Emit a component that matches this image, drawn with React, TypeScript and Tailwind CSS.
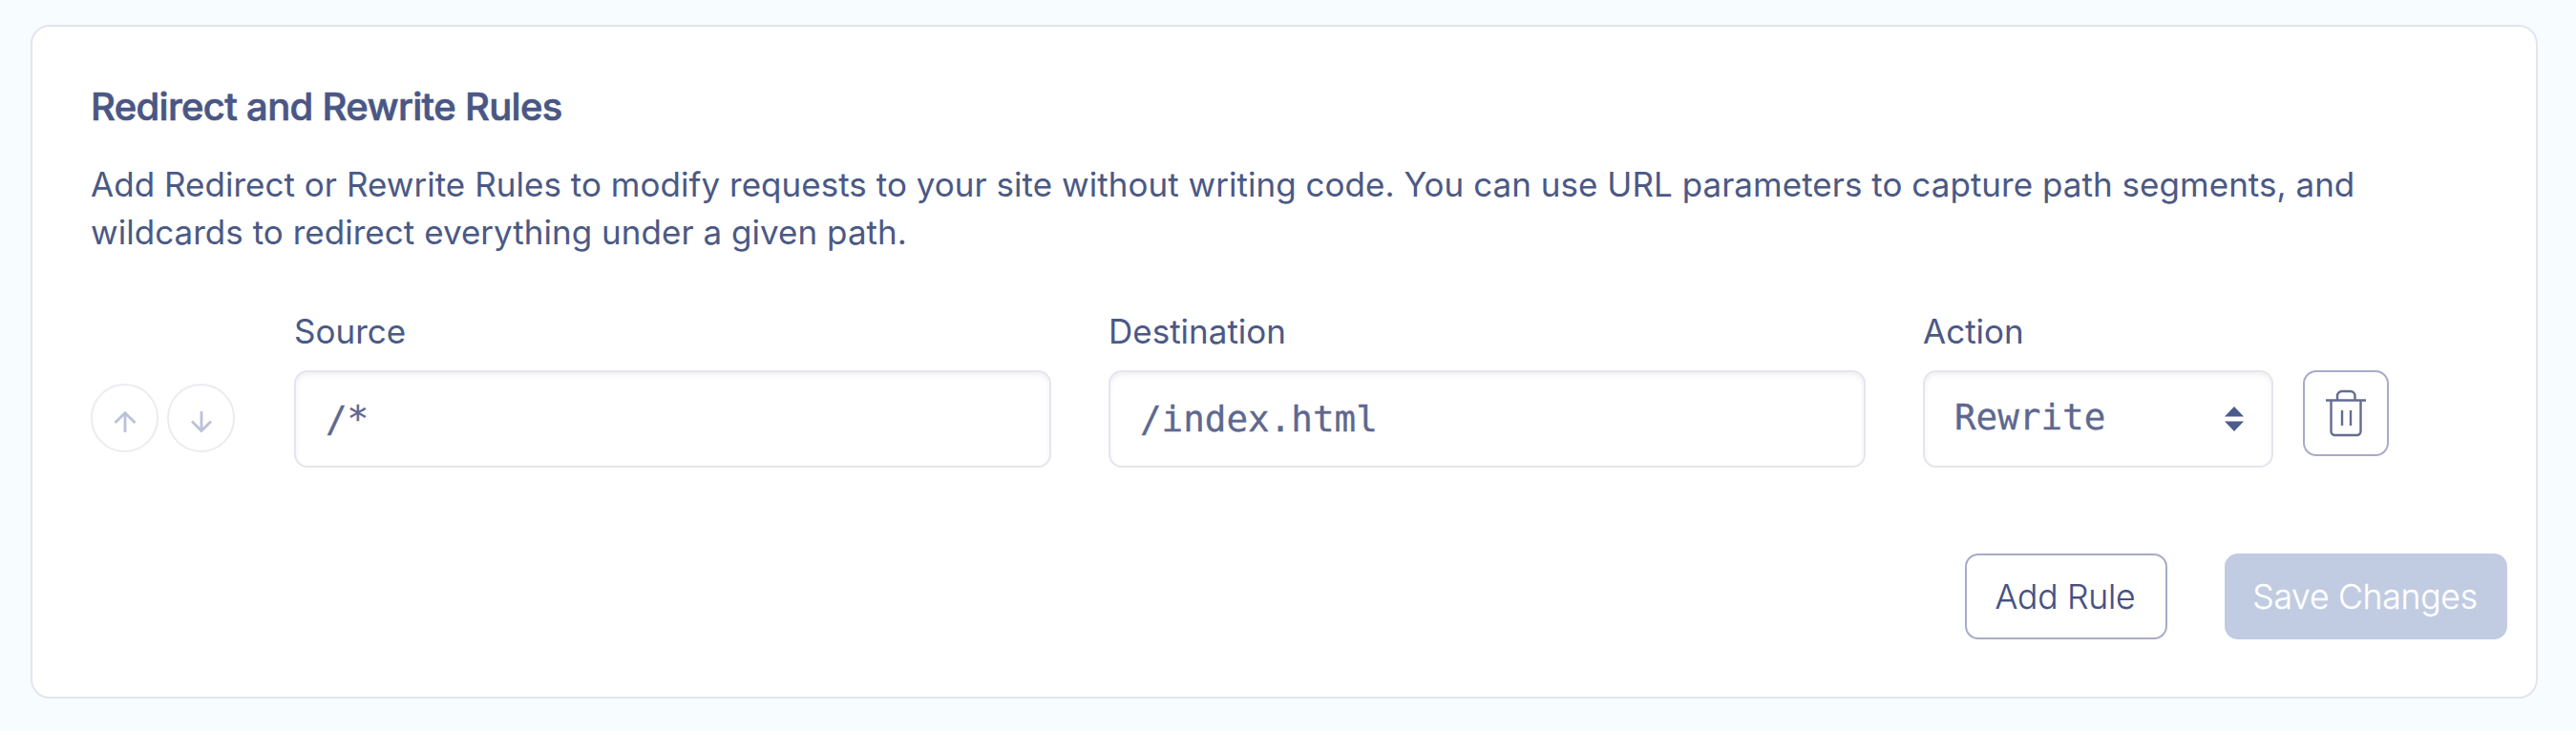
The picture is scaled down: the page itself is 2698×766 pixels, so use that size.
import React from "react";

const sans = "font-['Inter',sans-serif]";
const mono = "font-['DejaVu_Sans_Mono',monospace]";
const box =
  "flex h-[102px] items-center rounded-[14px] border-2 border-[#e5e5ee] bg-white shadow-[inset_0_3px_5px_rgba(60,60,110,0.08)]";

function RoundButton({ down = false }: { down?: boolean }) {
  return (
    <button
      type="button"
      aria-label={down ? "Move down" : "Move up"}
      className="flex h-[72px] w-[71px] items-center justify-center rounded-full border-2 border-[#ebebf2] pt-[8px] text-[#bcc1d9]"
    >
      <svg width="24" height="24" viewBox="0 0 24 24" fill="none" stroke="currentColor" strokeWidth="2.8">
        {down ? <path d="M12 1v20.500M2 11.500l10 10 10-10" /> : <path d="M12 23V2.500M1.500 13L12 2.800 22.500 13" />}
      </svg>
    </button>
  );
}

function Field({ label, value }: { label: string; value: string }) {
  return (
    <div className="w-[793px]">
      <div className="text-[35px] leading-[50px]">{label}</div>
      <div className={`mt-[16px] px-[31px] ${box} ${mono}`}>
        <span className="text-[37.6px] leading-[50px] text-[#5e688f] [-webkit-text-stroke:0.3px_#5e688f]">{value}</span>
      </div>
    </div>
  );
}

export default function App() {
  return (
    <div className={`h-[766px] w-[2698px] bg-[#f7fcff] pl-[32px] pt-[26px] text-[#4b5985] ${sans}`}>
      <section className="flex h-[706px] w-[2626px] flex-col rounded-[20px] border-2 border-[#e3e5ee] bg-white pl-[61px] pr-[30px] pt-[58px]">
        <h1 className="text-[40px] font-medium leading-[52px] tracking-[-0.68px] text-[#4a5785] [-webkit-text-stroke:0.7px_#4a5785]">
          Redirect and Rewrite Rules
        </h1>
        <p className="mt-[30px] whitespace-nowrap text-[35px] leading-[50px] tracking-[0.03px]">
          Add Redirect or Rewrite Rules to modify requests to your site without writing code. You can use URL
          parameters to capture path segments, and
          <br />
          wildcards to redirect everything under a given path.
        </p>
        <div className="mt-[54px] flex">
          <div className="mr-[63px] mt-[80px] flex gap-[9px]">
            <RoundButton />
            <RoundButton down />
          </div>
          <div className="-ml-px flex gap-[60px]">
            <Field label="Source" value="/*" />
            <Field label="Destination" value="/index.html" />
          </div>
          <div className="ml-[60px] w-[367px]">
            <div className="text-[35px] leading-[50px]">Action</div>
            <div className={`mt-[16px] justify-between pl-[31px] pr-[29px] ${box} ${mono}`}>
              <span className="-mt-[4px] text-[37.6px] leading-[50px] text-[#5e688f] [-webkit-text-stroke:0.3px_#5e688f]">
                Rewrite
              </span>
              <svg width="20" height="26" viewBox="0 0 20 26" fill="#4a5b8c">
                <path d="M10 0l10 10.500H0zM0 15.500h20L10 26z" />
              </svg>
            </div>
          </div>
          <button
            type="button"
            aria-label="Delete rule"
            className="ml-[31px] mt-[66px] flex h-[90px] w-[90px] items-center justify-center rounded-[14px] border-2 border-[#a7abc9]"
          >
            <svg width="42" height="50" viewBox="0 0 42 50" fill="none" stroke="#646d91" strokeWidth="2.4">
              <path d="M0 11.500h42M5.500 11.500v32.500a4 4 0 0 0 4 4h23a4 4 0 0 0 4-4V11.500M12 11.500V7a5 5 0 0 1 5-5h8.500a5 5 0 0 1 5 5v4.500M17 22v16M26 22v16" />
            </svg>
          </button>
        </div>
        <div className="mt-[90px] flex justify-end gap-[60px] text-[35.5px] font-light tracking-[-0.24px]">
          <button
            type="button"
            className="h-[90px] w-[212px] whitespace-nowrap rounded-[14px] border-2 border-[#a7abc9] pr-[2px] pt-[2px] text-[#465082] [-webkit-text-stroke:0.2px_#465082]"
          >
            Add Rule
          </button>
          <button
            type="button"
            disabled
            className="h-[90px] w-[296px] whitespace-nowrap rounded-[14px] bg-[#c1cce2] pr-[2px] pt-[2px] text-white [-webkit-text-stroke:0.3px_#ffffff]"
          >
            Save Changes
          </button>
        </div>
      </section>
    </div>
  );
}
